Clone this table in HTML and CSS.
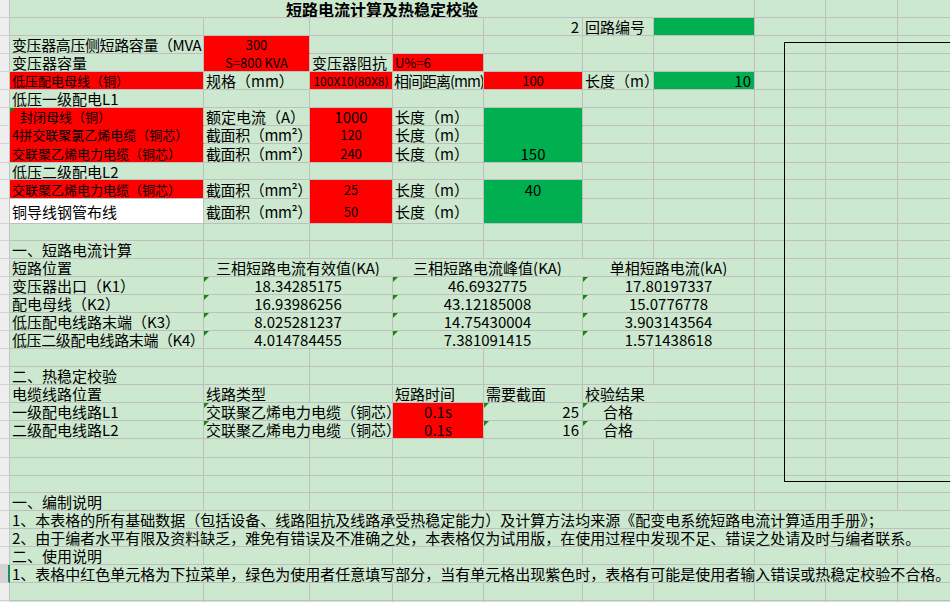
FILE: index.html
```html
<!DOCTYPE html>
<html lang="zh-CN">
<head>
<meta charset="utf-8">
<title>短路电流计算及热稳定校验</title>
<link rel="stylesheet" href="styles.css">
</head>
<body>
<div class="sheet">
  <div class="row">
    <div class="rh"></div>
    <div class="c wtitle ctr title">短路电流计算及热稳定校验</div>
    <div class="c wh"></div><div class="c wi"></div><div class="c wj"></div>
  </div>
  <div class="row">
    <div class="rh"></div>
    <div class="c wa"></div><div class="c wb"></div><div class="c wc"></div><div class="c wd"></div>
    <div class="c we rt">2</div><div class="c wf">回路编号</div><div class="c wg grn"></div>
    <div class="c wh"></div><div class="c wi"></div><div class="c wj"></div>
  </div>
  <div class="row">
    <div class="rh"></div>
    <div class="c wa tight">变压器高压侧短路容量（MVA</div><div class="c wb red ctr sm jb">300</div><div class="c wc"></div><div class="c wd"></div>
    <div class="c we"></div><div class="c wf"></div><div class="c wg"></div>
    <div class="c wh"></div><div class="c wi"></div><div class="c wj"></div>
  </div>
  <div class="row">
    <div class="rh"></div>
    <div class="c wa">变压器容量</div><div class="c wb red ctr sm">S=800 KVA</div><div class="c wc">变压器阻抗</div><div class="c wd red sm">U%=6</div>
    <div class="c we"></div><div class="c wf"></div><div class="c wg"></div>
    <div class="c wh"></div><div class="c wi"></div><div class="c wj"></div>
  </div>
  <div class="row">
    <div class="rh"></div>
    <div class="c wa red sm">低压配电母线（铜）</div><div class="c wb">规格（mm）</div><div class="c wc red xs ctr">100X10(80X8)</div><div class="c wd tighter">相间距离(mm)</div>
    <div class="c we red ctr sm">100</div><div class="c wf">长度（m）</div><div class="c wg grn rt">10</div>
    <div class="c wh"></div><div class="c wi"></div><div class="c wj"></div>
  </div>
  <div class="row">
    <div class="rh"></div>
    <div class="c wa">低压一级配电L1</div><div class="c wb"></div><div class="c wc"></div><div class="c wd"></div>
    <div class="c we"></div><div class="c wf"></div><div class="c wg"></div>
    <div class="c wh"></div><div class="c wi"></div><div class="c wj"></div>
  </div>
  <div class="row">
    <div class="rh"></div>
    <div class="c wa red sm jb tri indent">封闭母线（铜）</div><div class="c wb">额定电流（A）</div><div class="c wc red ctr jb">1000</div><div class="c wd">长度（m）</div>
    <div class="c we grn jb"></div><div class="c wf"></div><div class="c wg"></div>
    <div class="c wh"></div><div class="c wi"></div><div class="c wj"></div>
  </div>
  <div class="row">
    <div class="rh"></div>
    <div class="c wa red sm jb">4拼交联聚氯乙烯电缆（铜芯）</div><div class="c wb tight">截面积（mm²）</div><div class="c wc red ctr sm jb">120</div><div class="c wd">长度（m）</div>
    <div class="c we grn jb"></div><div class="c wf"></div><div class="c wg"></div>
    <div class="c wh"></div><div class="c wi"></div><div class="c wj"></div>
  </div>
  <div class="row h19">
    <div class="rh"></div>
    <div class="c wa red sm">交联聚乙烯电力电缆（铜芯）</div><div class="c wb tight">截面积（mm²）</div><div class="c wc red ctr sm">240</div><div class="c wd">长度（m）</div>
    <div class="c we grn ctr">150</div><div class="c wf"></div><div class="c wg"></div>
    <div class="c wh"></div><div class="c wi"></div><div class="c wj"></div>
  </div>
  <div class="row h17">
    <div class="rh"></div>
    <div class="c wa">低压二级配电L2</div><div class="c wb"></div><div class="c wc"></div><div class="c wd"></div>
    <div class="c we"></div><div class="c wf"></div><div class="c wg"></div>
    <div class="c wh"></div><div class="c wi"></div><div class="c wj"></div>
  </div>
  <div class="row h19">
    <div class="rh"></div>
    <div class="c wa red sm">交联聚乙烯电力电缆（铜芯）</div><div class="c wb tight">截面积（mm²）</div><div class="c wc red ctr sm jb">25</div><div class="c wd">长度（m）</div>
    <div class="c we grn ctr jb">40</div><div class="c wf"></div><div class="c wg"></div>
    <div class="c wh"></div><div class="c wi"></div><div class="c wj"></div>
  </div>
  <div class="row h25">
    <div class="rh"></div>
    <div class="c wa wht">铜导线钢管布线</div><div class="c wb tight">截面积（mm²）</div><div class="c wc red ctr sm">50</div><div class="c wd">长度（m）</div>
    <div class="c we grn"></div><div class="c wf"></div><div class="c wg"></div>
    <div class="c wh"></div><div class="c wi"></div><div class="c wj"></div>
  </div>
  <div class="row h17">
    <div class="rh"></div>
    <div class="c wa"></div><div class="c wb"></div><div class="c wc"></div><div class="c wd"></div>
    <div class="c we"></div><div class="c wf"></div><div class="c wg"></div>
    <div class="c wh"></div><div class="c wi"></div><div class="c wj"></div>
  </div>
  <div class="row">
    <div class="rh"></div>
    <div class="c wa">一、短路电流计算</div><div class="c wb"></div><div class="c wc"></div><div class="c wd"></div>
    <div class="c we"></div><div class="c wf"></div><div class="c wg"></div>
    <div class="c wh"></div><div class="c wi"></div><div class="c wj"></div>
  </div>
  <div class="row">
    <div class="rh"></div>
    <div class="c wa">短路位置</div>
    <div class="c wbc ctr nr">三相短路电流有效值(KA)</div>
    <div class="c wde ctr nr">三相短路电流峰值(KA)</div>
    <div class="c wfg ctr">单相短路电流(kA)</div>
    <div class="c wh"></div><div class="c wi"></div><div class="c wj"></div>
  </div>
  <div class="row">
    <div class="rh"></div>
    <div class="c wa">变压器出口（K1）</div>
    <div class="c wbc ctr tri">18.34285175</div>
    <div class="c wde ctr tri">46.6932775</div>
    <div class="c wfg ctr tri">17.80197337</div>
    <div class="c wh"></div><div class="c wi"></div><div class="c wj"></div>
  </div>
  <div class="row">
    <div class="rh"></div>
    <div class="c wa">配电母线（K2）</div>
    <div class="c wbc ctr tri">16.93986256</div>
    <div class="c wde ctr tri">43.12185008</div>
    <div class="c wfg ctr tri">15.0776778</div>
    <div class="c wh"></div><div class="c wi"></div><div class="c wj"></div>
  </div>
  <div class="row">
    <div class="rh"></div>
    <div class="c wa">低压配电线路末端（K3）</div>
    <div class="c wbc ctr tri">8.025281237</div>
    <div class="c wde ctr tri">14.75430004</div>
    <div class="c wfg ctr tri">3.903143564</div>
    <div class="c wh"></div><div class="c wi"></div><div class="c wj"></div>
  </div>
  <div class="row">
    <div class="rh"></div>
    <div class="c wa tight">低压二级配电线路末端（K4）</div>
    <div class="c wbc ctr tri">4.014784455</div>
    <div class="c wde ctr tri">7.381091415</div>
    <div class="c wfg ctr tri">1.571438618</div>
    <div class="c wh"></div><div class="c wi"></div><div class="c wj"></div>
  </div>
  <div class="row">
    <div class="rh"></div>
    <div class="c wa"></div><div class="c wb"></div><div class="c wc"></div><div class="c wd"></div>
    <div class="c we"></div><div class="c wf"></div><div class="c wg"></div>
    <div class="c wh"></div><div class="c wi"></div><div class="c wj"></div>
  </div>
  <div class="row">
    <div class="rh"></div>
    <div class="c wa">二、热稳定校验</div><div class="c wb"></div><div class="c wc"></div><div class="c wd"></div>
    <div class="c we"></div><div class="c wf"></div><div class="c wg"></div>
    <div class="c wh"></div><div class="c wi"></div><div class="c wj"></div>
  </div>
  <div class="row">
    <div class="rh"></div>
    <div class="c wa">电缆线路位置</div><div class="c wb">线路类型</div><div class="c wc"></div><div class="c wd">短路时间</div>
    <div class="c we">需要截面</div><div class="c wf nr">校验结果</div><div class="c wg"></div>
    <div class="c wh"></div><div class="c wi"></div><div class="c wj"></div>
  </div>
  <div class="row">
    <div class="rh"></div>
    <div class="c wa">一级配电线路L1</div><div class="c wbc tri">交联聚乙烯电力电缆（铜芯）</div><div class="c wd red ctr jb">0.1s</div>
    <div class="c we rt tri">25</div><div class="c wf ctr nr tri">合格</div><div class="c wg"></div>
    <div class="c wh"></div><div class="c wi"></div><div class="c wj"></div>
  </div>
  <div class="row">
    <div class="rh"></div>
    <div class="c wa">二级配电线路L2</div><div class="c wbc tri">交联聚乙烯电力电缆（铜芯）</div><div class="c wd red ctr">0.1s</div>
    <div class="c we rt tri">16</div><div class="c wf ctr nr tri">合格</div><div class="c wg"></div>
    <div class="c wh"></div><div class="c wi"></div><div class="c wj"></div>
  </div>
  <div class="row h19">
    <div class="rh"></div>
    <div class="c wa"></div><div class="c wb"></div><div class="c wc"></div><div class="c wd"></div>
    <div class="c we"></div><div class="c wf"></div><div class="c wg"></div>
    <div class="c wh"></div><div class="c wi"></div><div class="c wj"></div>
  </div>
  <div class="row">
    <div class="rh"></div>
    <div class="c wa"></div><div class="c wb"></div><div class="c wc"></div><div class="c wd"></div>
    <div class="c we"></div><div class="c wf"></div><div class="c wg"></div>
    <div class="c wh"></div><div class="c wi"></div><div class="c wj"></div>
  </div>
  <div class="row h17">
    <div class="rh"></div>
    <div class="c wa"></div><div class="c wb"></div><div class="c wc"></div><div class="c wd"></div>
    <div class="c we"></div><div class="c wf"></div><div class="c wg"></div>
    <div class="c wh"></div><div class="c wi"></div><div class="c wj"></div>
  </div>
  <div class="row">
    <div class="rh"></div>
    <div class="c wa">一、编制说明</div><div class="c wb"></div><div class="c wc"></div><div class="c wd"></div>
    <div class="c we"></div><div class="c wf"></div><div class="c wg"></div>
    <div class="c wh"></div><div class="c wi"></div><div class="c wj"></div>
  </div>
  <div class="row">
    <div class="rh"></div>
    <div class="c wall">1、本表格的所有基础数据（包括设备、线路阻抗及线路承受热稳定能力）及计算方法均来源《配变电系统短路电流计算适用手册》；</div>
  </div>
  <div class="row">
    <div class="rh"></div>
    <div class="c wall">2、由于编者水平有限及资料缺乏，难免有错误及不准确之处，本表格仅为试用版，在使用过程中发现不足、错误之处请及时与编者联系。</div>
  </div>
  <div class="row">
    <div class="rh"></div>
    <div class="c wa">二、使用说明</div><div class="c wb"></div><div class="c wc"></div><div class="c wd"></div>
    <div class="c we"></div><div class="c wf"></div><div class="c wg"></div>
    <div class="c wh"></div><div class="c wi"></div><div class="c wj"></div>
  </div>
  <div class="row">
    <div class="rh sel"></div>
    <div class="c wall">1、表格中红色单元格为下拉菜单，绿色为使用者任意填写部分，当有单元格出现紫色时，表格有可能是使用者输入错误或热稳定校验不合格。</div>
  </div>
  <div class="row">
    <div class="rh"></div>
    <div class="c wa"></div><div class="c wb"></div><div class="c wc"></div><div class="c wd"></div>
    <div class="c we"></div><div class="c wf"></div><div class="c wg"></div>
    <div class="c wh"></div><div class="c wi"></div><div class="c wj"></div>
  </div>
  <div class="row">
    <div class="rh"></div>
    <div class="c wa"></div><div class="c wb"></div><div class="c wc"></div><div class="c wd"></div>
    <div class="c we"></div><div class="c wf"></div><div class="c wg"></div>
    <div class="c wh"></div><div class="c wi"></div><div class="c wj"></div>
  </div>
  <div class="frame"></div>
</div>
</body>
</html>
```
FILE: styles.css
```css
body {
  margin: 0;
  background: #cce8cf;
  overflow: hidden;
  font-family: "Noto Sans CJK SC", "Noto Sans", sans-serif;
  font-size: 15px;
  color: #000;
}

.sheet {
  position: relative;
  width: 970px;
}

.row {
  display: flex;
  height: 18px;
}
.row.h17 { height: 17px; }
.row.h19 { height: 19px; }
.row.h25 { height: 25px; }

.rh {
  flex: none;
  width: 10px;
  box-sizing: border-box;
  background: #eeeeee;
  border-right: 1px solid #c4c4c4;
  border-bottom: 1px solid #d2d2d2;
}
.rh.sel {
  background: #d4d4d4;
  border-right: 2px solid #1f8a66;
}

.c {
  flex: none;
  box-sizing: border-box;
  height: 100%;
  border-right: 1px solid #bfbfbf;
  border-bottom: 1px solid #bfbfbf;
  padding: 0 2px;
  white-space: nowrap;
  overflow: hidden;
  display: flex;
  align-items: center;
  line-height: 1;
  position: relative;
}

.wa { width: 194px; }
.wb { width: 106px; }
.wc { width: 83px; }
.wd { width: 91px; }
.we { width: 99px; }
.wf { width: 71px; }
.wg { width: 101px; }
.wh { width: 71px; }
.wi { width: 72px; }
.wj { width: 72px; }
.wbc { width: 189px; }
.wde { width: 190px; }
.wfg { width: 172px; }
.wtitle { width: 745px; }
.wall { width: 960px; border-right: none; }

.ctr { justify-content: center; }
.rt { justify-content: flex-end; padding-right: 3px; }
.nr { border-right-color: transparent; }
.jb { border-bottom-color: transparent; }
.indent { padding-left: 10px; }
.tight { letter-spacing: -0.4px; }
.tighter { letter-spacing: -1px; padding: 0 1px; }

.title {
  font-weight: 700;
  font-size: 16px;
}

.sm { font-size: 13px; }
.xs { font-size: 12px; padding: 0 1px; }

.red { background: #ff0000; }
.grn { background: #00b050; }
.wht { background: #ffffff; }

.tri::before {
  content: "";
  position: absolute;
  left: 0;
  top: 0;
  border-top: 5px solid #128a12;
  border-right: 5px solid transparent;
}

.frame {
  position: absolute;
  left: 784px;
  top: 42px;
  width: 200px;
  height: 440px;
  box-sizing: border-box;
  border: 1px solid #000;
  pointer-events: none;
}
```
